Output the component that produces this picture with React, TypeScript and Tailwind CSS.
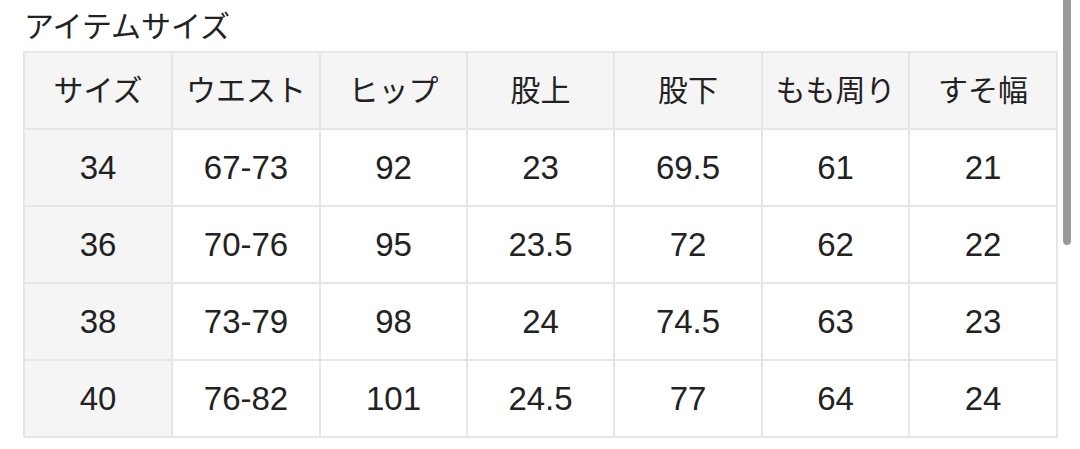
const headers = ["サイズ", "ウエスト", "ヒップ", "股上", "股下", "もも周り", "すそ幅"]

const rows = [
    ["34", "67-73", "92", "23", "69.5", "61", "21"],
    ["36", "70-76", "95", "23.5", "72", "62", "22"],
    ["38", "73-79", "98", "24", "74.5", "63", "23"],
    ["40", "76-82", "101", "24.5", "77", "64", "24"],
]

const widths = ["w-[148px]", "w-[148px]", "w-[147px]", "w-[147px]", "w-[148px]", "w-[147px]", "w-[148px]"]

const App = () => {
    return (
        <section className="relative w-[1080px] h-[449px] overflow-hidden bg-white text-[#222] font-['Liberation_Sans','Noto_Sans_CJK_JP',sans-serif]">
            <div className="h-[51px] pl-[24px] flex items-center pt-[3px]">
                <h2 className="text-[30px] leading-none font-normal">アイテムサイズ</h2>
            </div>
            <div className="pl-[23px]">
                <table className="w-[1033px] table-fixed border-collapse border-2 border-[#e6e6e6]">
                    <colgroup>
                        {widths.map((w, i) => (
                            <col key={i} className={w} />
                        ))}
                    </colgroup>
                    <thead>
                        <tr className="h-[77px] bg-[#f5f5f5]">
                            {headers.map((h) => (
                                <th key={h} className="border-2 border-[#e6e6e6] text-center text-[30px] font-normal leading-none">
                                    {h}
                                </th>
                            ))}
                        </tr>
                    </thead>
                    <tbody>
                        {rows.map((row) => (
                            <tr key={row[0]} className="h-[77px]">
                                {row.map((cell, i) => (
                                    <td
                                        key={i}
                                        className={
                                            i === 0
                                                ? "border-2 border-[#e6e6e6] bg-[#f5f5f5] text-center text-[33px] leading-none"
                                                : "border-2 border-[#e6e6e6] text-center text-[33px] leading-none"
                                        }
                                    >
                                        {cell}
                                    </td>
                                ))}
                            </tr>
                        ))}
                    </tbody>
                </table>
            </div>
            {/* scrollbar */}
            <div className="absolute left-[1063px] top-0 w-[8px] h-[245px] rounded-b-full bg-[#9a9a9a]" />
        </section>
    )
}

export default App
